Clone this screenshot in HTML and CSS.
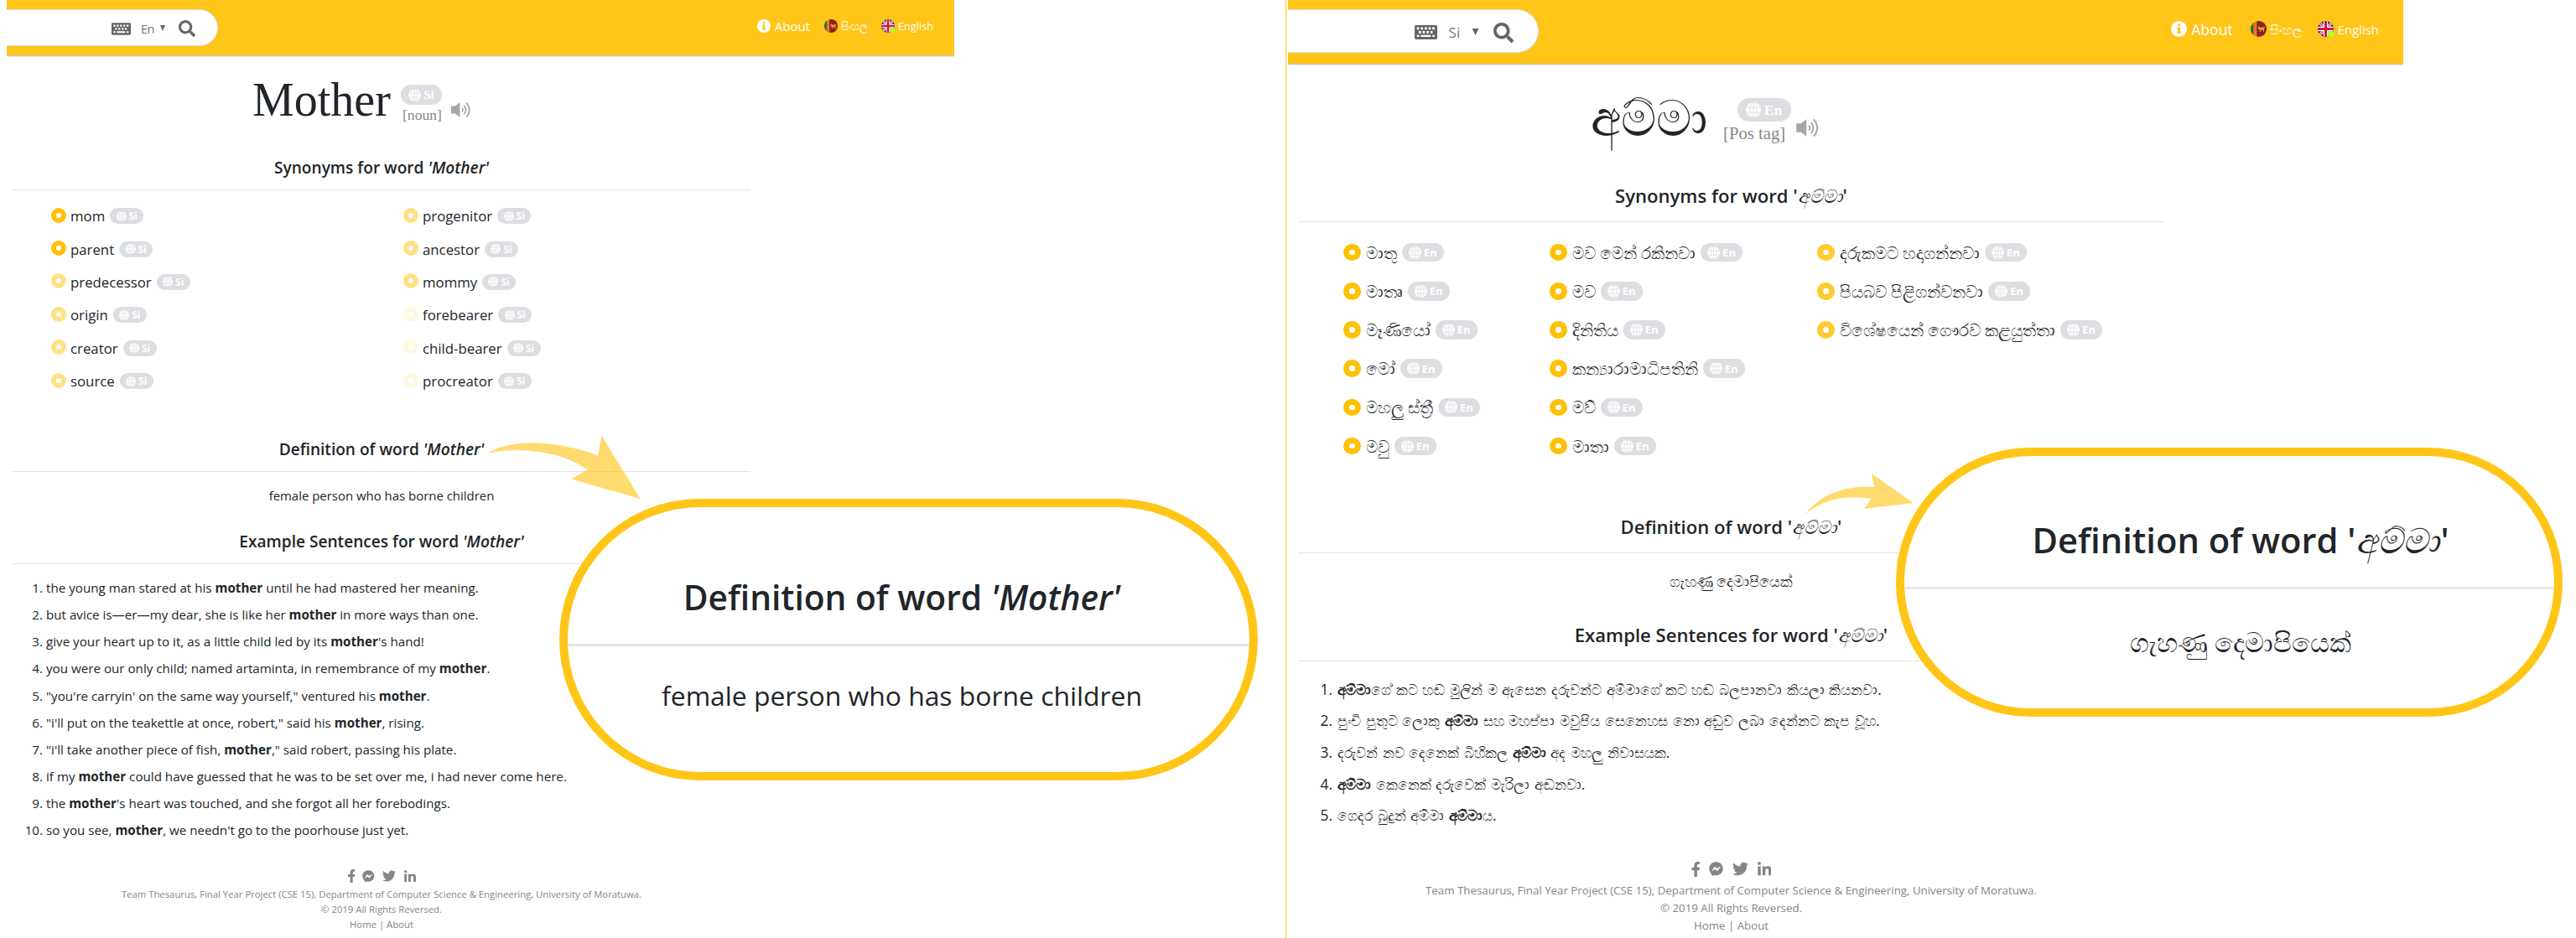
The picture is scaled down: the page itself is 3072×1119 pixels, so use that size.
FILE: index.html
```
<!DOCTYPE html>
<html lang="en">
<head>
<meta charset="utf-8">
<title>Thesaurus</title>
<link rel="stylesheet" href="styles.css">
</head>
<body>
<svg class="defs" aria-hidden="true">
  <symbol id="keyboard" viewBox="0 0 24 15">
    <path fill="currentColor" fill-rule="evenodd" d="M1.5 0h21A1.5 1.5 0 0 1 24 1.500v12a1.5 1.500 0 0 1-1.500 1.500h-21A1.500 1.500 0 0 1 0 13.500v-12A1.500 1.500 0 0 1 1.500 0zM2.400 2.200v2.400h2.400v-2.400zM6.500 2.200v2.400h2.400v-2.400zM10.600 2.200v2.400h2.400v-2.400zM14.700 2.200v2.400h2.400v-2.400zM18.800 2.200v2.400h2.400v-2.400zM4.400 6.200v2.400h2.400v-2.400zM8.500 6.200v2.400h2.400v-2.400zM12.600 6.200v2.400h2.400v-2.400zM16.700 6.200v2.400h2.400v-2.400zM2.400 10.400v2h2.400v-2zM6.500 10.400v2h10.600v-2zM18.800 10.400v2h2.400v-2z"/>
  </symbol>
  <symbol id="search" viewBox="0 0 512 512"><path fill="currentColor" d="M505 442.700L405.300 343c-4.500-4.500-10.600-7-17-7H372c27.600-35.300 44-79.700 44-128C416 93.100 322.900 0 208 0S0 93.100 0 208s93.100 208 208 208c48.300 0 92.700-16.400 128-44v16.300c0 6.400 2.500 12.500 7 17l99.700 99.700c9.400 9.400 24.600 9.400 33.900 0l28.300-28.300c9.400-9.400 9.400-24.600.1-34zM208 336c-70.700 0-128-57.200-128-128 0-70.700 57.200-128 128-128 70.700 0 128 57.200 128 128 0 70.700-57.200 128-128 128z"/></symbol>
  <symbol id="info" viewBox="0 0 16 16"><circle cx="8" cy="8" r="8" fill="#fff"/><path fill="#ffc517" d="M6.800 3.200h2.400v2.200H6.800zM6 6.500h3.300v4.300h.9v1.600H5.900v-1.600h1V8H6z"/></symbol>
  <symbol id="flag-lk" viewBox="0 0 16 16">
    <clipPath id="c1"><circle cx="8" cy="8" r="8"/></clipPath>
    <g clip-path="url(#c1)"><path fill="#d8a21b" d="M0 0h16v16H0z"/><path fill="#0b6b52" d="M0 0h2.800v16H0z"/><path fill="#ef6c1a" d="M2.800 0h2.400v16H2.800z"/><path fill="#8d2029" d="M6 0h10v16H6z"/><path fill="#e0a21c" d="M7.500 6.500l1-1.500 1 1.500h3l1-1 .8 1-.8 1v3.500h-1V9.300H10V11H9V8.500H7.500z"/></g>
  </symbol>
  <symbol id="flag-uk" viewBox="0 0 16 16">
    <clipPath id="c2"><circle cx="8" cy="8" r="8"/></clipPath>
    <g clip-path="url(#c2)"><path fill="#18246b" d="M0 0h16v16H0z"/><path stroke="#fff" stroke-width="2.600" d="M0 0l16 16M16 0L0 16"/><path stroke="#d8153a" stroke-width="1" d="M0 0l16 16M16 0L0 16"/><path stroke="#fff" stroke-width="4.600" d="M8 0v16M0 8h16"/><path stroke="#d8153a" stroke-width="2.600" d="M8 0v16M0 8h16"/></g>
    <circle cx="13" cy="13" r="3.200" fill="#adff2f"/>
  </symbol>
  <symbol id="globe" viewBox="0 0 16 16"><circle cx="8" cy="8" r="8" fill="#fff"/><path fill="none" stroke="#dddee1" stroke-width=".8" d="M8 0v16M.3 5.300h15.400M.3 10.700h15.400"/><ellipse cx="8" cy="8" rx="3.700" ry="8" fill="none" stroke="#dddee1" stroke-width=".8"/></symbol>
  <symbol id="speaker" viewBox="0 0 24 20"><path fill="#a6a6a6" d="M0 5.500h5L10.500 1v18L5 14.500H0z"/><path fill="none" stroke="#a6a6a6" stroke-width="1.700" d="M13 7.500q2 2.500 0 5M15.300 4.500q4.600 5.500 0 11M18 1.200q7.500 8.800 0 17.600"/></symbol>
  <symbol id="facebook" viewBox="22 0 258 512"><path fill="currentColor" d="M279.140 288l14.220-92.660h-88.910v-60.130c0-25.350 12.420-50.060 52.240-50.060h40.420V6.260S260.430 0 225.360 0c-73.220 0-121.080 44.380-121.080 124.720v70.620H22.890V288h81.390v224h100.170V288z"/></symbol>
  <symbol id="messenger" viewBox="0 0 512 512"><path fill="currentColor" d="M256.550 8C116.520 8 8 110.340 8 248.570c0 72.300 29.710 134.780 78.070 177.940 8.350 7.510 6.630 11.860 8.050 58.230A19.920 19.920 0 0 0 122 502.310c52.910-23.300 53.590-25.140 62.560-22.700C337.850 521.800 504 423.700 504 248.570 504 110.340 396.590 8 256.550 8zm149.240 185.130l-73 115.570a37.370 37.370 0 0 1-53.910 9.930l-58.080-43.470a15 15 0 0 0-18 0l-78.370 59.440c-10.460 7.930-24.160-4.600-17.110-15.670l73-115.570a37.360 37.360 0 0 1 53.910-9.930l58.060 43.460a15 15 0 0 0 18 0l78.410-59.380c10.440-7.980 24.140 4.540 17.090 15.620z"/></symbol>
  <symbol id="twitter" viewBox="0 0 512 512"><path fill="currentColor" d="M459.370 151.716c.325 4.548.325 9.097.325 13.645 0 138.720-105.583 298.558-298.558 298.558-59.452 0-114.680-17.219-161.137-47.106 8.447.974 16.568 1.299 25.340 1.299 49.055 0 94.213-16.568 130.274-44.832-46.132-.975-84.792-31.188-98.112-72.772 6.498.974 12.995 1.624 19.818 1.624 9.421 0 18.843-1.300 27.614-3.573-48.081-9.747-84.143-51.980-84.143-102.985v-1.299c13.969 7.797 30.214 12.670 47.431 13.319-28.264-18.843-46.781-51.005-46.781-87.391 0-19.492 5.197-37.360 14.294-52.954 51.655 63.675 129.300 105.258 216.365 109.807-1.624-7.797-2.599-15.918-2.599-24.040 0-57.828 46.782-104.934 104.934-104.934 30.213 0 57.502 12.670 76.670 33.137 23.715-4.548 46.456-13.320 66.599-25.340-7.798 24.366-24.366 44.833-46.132 57.827 21.117-2.273 41.584-8.122 60.426-16.243-14.292 20.791-32.161 39.308-52.628 54.253z"/></symbol>
  <symbol id="linkedin" viewBox="0 0 448 448"><path fill="currentColor" d="M100.280 448H7.400V148.900h92.880zM53.790 108.100C24.090 108.100 0 83.500 0 53.800a53.790 53.790 0 0 1 107.580 0c0 29.700-24.100 54.300-53.790 54.300zM447.900 448h-92.680V302.400c0-34.700-.7-79.200-48.290-79.200-48.290 0-55.690 37.700-55.690 76.700V448h-92.780V148.900h89.080v40.800h1.300c12.400-23.500 42.690-48.300 87.880-48.300 94 0 111.280 61.900 111.280 142.300V448z"/></symbol>
</svg>

<main class="board">
<section class="panel en">
  <header class="bar">
    <div class="searchbox"><svg class="kb"><use href="#keyboard"/></svg><span class="lang">En</span><i class="caret"></i><svg class="mag"><use href="#search"/></svg></div>
    <nav>
      <a class="about"><svg><use href="#info"/></svg>About</a>
      <a class="si-link"><svg><use href="#flag-lk"/></svg>සිංහල</a>
      <a class="en-link"><svg><use href="#flag-uk"/></svg>English</a>
    </nav>
  </header>
  <div class="content">
    <div class="title">
      <h1>Mother</h1>
      <div class="meta"><span class="badge big"><svg><use href="#globe"/></svg>Si</span><span class="pos">[noun]</span></div>
      <svg class="spk"><use href="#speaker"/></svg>
    </div>
    <h2>Synonyms for word <em>'Mother'</em></h2>
    <div class="cols">
      <ul>
        <li><i class="dot"></i>mom<span class="badge"><svg><use href="#globe"/></svg>Si</span></li>
        <li><i class="dot"></i>parent<span class="badge"><svg><use href="#globe"/></svg>Si</span></li>
        <li><i class="dot mid"></i>predecessor<span class="badge"><svg><use href="#globe"/></svg>Si</span></li>
        <li><i class="dot mid"></i>origin<span class="badge"><svg><use href="#globe"/></svg>Si</span></li>
        <li><i class="dot mid"></i>creator<span class="badge"><svg><use href="#globe"/></svg>Si</span></li>
        <li><i class="dot mid"></i>source<span class="badge"><svg><use href="#globe"/></svg>Si</span></li>
      </ul>
      <ul>
        <li><i class="dot mid"></i>progenitor<span class="badge"><svg><use href="#globe"/></svg>Si</span></li>
        <li><i class="dot mid"></i>ancestor<span class="badge"><svg><use href="#globe"/></svg>Si</span></li>
        <li><i class="dot mid"></i>mommy<span class="badge"><svg><use href="#globe"/></svg>Si</span></li>
        <li><i class="dot low"></i>forebearer<span class="badge"><svg><use href="#globe"/></svg>Si</span></li>
        <li><i class="dot low"></i>child-bearer<span class="badge"><svg><use href="#globe"/></svg>Si</span></li>
        <li><i class="dot low"></i>procreator<span class="badge"><svg><use href="#globe"/></svg>Si</span></li>
      </ul>
    </div>
    <h2>Definition of word <em>'Mother'</em></h2>
    <p class="def">female person who has borne children</p>
    <h2>Example Sentences for word <em>'Mother'</em></h2>
    <ol>
      <li>the young man stared at his <b>mother</b> until he had mastered her meaning.</li>
      <li>but avice is—er—my dear, she is like her <b>mother</b> in more ways than one.</li>
      <li>give your heart up to it, as a little child led by its <b>mother</b>'s hand!</li>
      <li>you were our only child; named artaminta, in remembrance of my <b>mother</b>.</li>
      <li>"you're carryin' on the same way yourself," ventured his <b>mother</b>.</li>
      <li>"i'll put on the teakettle at once, robert," said his <b>mother</b>, rising.</li>
      <li>"i'll take another piece of fish, <b>mother</b>," said robert, passing his plate.</li>
      <li>if my <b>mother</b> could have guessed that he was to be set over me, i had never come here.</li>
      <li>the <b>mother</b>'s heart was touched, and she forgot all her forebodings.</li>
      <li>so you see, <b>mother</b>, we needn't go to the poorhouse just yet.</li>
    </ol>
    <footer>
      <div class="social"><svg class="fb"><use href="#facebook"/></svg><svg class="ms"><use href="#messenger"/></svg><svg class="tw"><use href="#twitter"/></svg><svg class="in"><use href="#linkedin"/></svg></div>
      <p>Team Thesaurus, Final Year Project (CSE 15), Department of Computer Science &amp; Engineering, University of Moratuwa.</p>
      <p>© 2019 All Rights Reversed.</p>
      <p>Home | About</p>
    </footer>
  </div>
  <svg class="arrow" viewBox="581 519 183 77"><path d="M581 540.700C598 531 619 528 640.600 528.400C668 530 692 535 713 543.400L717.500 519.700L763.600 595L681 571.500L700.600 560.400C680 545 650 538 616 536.700C603 537 591 538.500 581 540.700Z"/></svg>
  <aside class="callout">
    <h3>Definition of word <em>'Mother'</em></h3>
    <p>female person who has borne children</p>
  </aside>
</section>

<section class="panel si">
  <header class="bar">
    <div class="searchbox"><svg class="kb"><use href="#keyboard"/></svg><span class="lang">Si</span><i class="caret"></i><svg class="mag"><use href="#search"/></svg></div>
    <nav>
      <a class="about"><svg><use href="#info"/></svg>About</a>
      <a class="si-link"><svg><use href="#flag-lk"/></svg>සිංහල</a>
      <a class="en-link"><svg><use href="#flag-uk"/></svg>English</a>
    </nav>
  </header>
  <div class="content">
    <div class="title">
      <h1>අම්මා</h1>
      <div class="meta"><span class="badge big"><svg><use href="#globe"/></svg>En</span><span class="pos">[Pos tag]</span></div>
      <svg class="spk"><use href="#speaker"/></svg>
    </div>
    <h2>Synonyms for word '<em>අම්මා</em>'</h2>
    <div class="cols">
      <ul>
        <li><i class="dot"></i>මාතු<span class="badge"><svg><use href="#globe"/></svg>En</span></li>
        <li><i class="dot"></i>මාතෘ<span class="badge"><svg><use href="#globe"/></svg>En</span></li>
        <li><i class="dot"></i>මෑණියෝ<span class="badge"><svg><use href="#globe"/></svg>En</span></li>
        <li><i class="dot"></i>මෝ<span class="badge"><svg><use href="#globe"/></svg>En</span></li>
        <li><i class="dot"></i>මහලු ස්ත්‍රී<span class="badge"><svg><use href="#globe"/></svg>En</span></li>
        <li><i class="dot"></i>මවු<span class="badge"><svg><use href="#globe"/></svg>En</span></li>
      </ul>
      <ul>
        <li><i class="dot"></i>මව මෙන් රකිනවා<span class="badge"><svg><use href="#globe"/></svg>En</span></li>
        <li><i class="dot"></i>මව<span class="badge"><svg><use href="#globe"/></svg>En</span></li>
        <li><i class="dot"></i>දිනිතිය<span class="badge"><svg><use href="#globe"/></svg>En</span></li>
        <li><i class="dot"></i>කන්‍යාරාමාධිපතිනි<span class="badge"><svg><use href="#globe"/></svg>En</span></li>
        <li><i class="dot"></i>මව්<span class="badge"><svg><use href="#globe"/></svg>En</span></li>
        <li><i class="dot"></i>මාතා<span class="badge"><svg><use href="#globe"/></svg>En</span></li>
      </ul>
      <ul>
        <li><i class="dot high"></i>දරුකමට හදාගන්නවා<span class="badge"><svg><use href="#globe"/></svg>En</span></li>
        <li><i class="dot high"></i>පියබව පිළිගන්වනවා<span class="badge"><svg><use href="#globe"/></svg>En</span></li>
        <li><i class="dot high"></i>විශේෂයෙන් ගෞරව කළයුත්තා<span class="badge"><svg><use href="#globe"/></svg>En</span></li>
      </ul>
    </div>
    <h2>Definition of word '<em>අම්මා</em>'</h2>
    <p class="def">ගැහණු දෙමාපියෙක්</p>
    <h2>Example Sentences for word '<em>අම්මා</em>'</h2>
    <ol>
      <li><b>අම්මා</b>ගේ කට හඬ මුලින් ම ඇසෙන දරුවන්ට අම්මාගේ කට හඬ බලපානවා කියලා කියනවා.</li>
      <li>පුංචි පුතුට ලොකු <b>අම්මා</b> සහ මහප්පා මවුපිය සෙනෙහස නො අඩුව ලබා දෙන්නට කැප වූහ.</li>
      <li>දරුවන් නව දෙනෙක් බිහිකල <b>අම්මා</b> අද මහලු නිවාසයක.</li>
      <li><b>අම්මා</b> කෙනෙක් දරුවෙක් මැරිලා අඬනවා.</li>
      <li>ගෙදර බුදුන් අම්මා <b>අම්මා</b>ය.</li>
    </ol>
    <footer>
      <div class="social"><svg class="fb"><use href="#facebook"/></svg><svg class="ms"><use href="#messenger"/></svg><svg class="tw"><use href="#twitter"/></svg><svg class="in"><use href="#linkedin"/></svg></div>
      <p>Team Thesaurus, Final Year Project (CSE 15), Department of Computer Science &amp; Engineering, University of Moratuwa.</p>
      <p>© 2019 All Rights Reversed.</p>
      <p>Home | About</p>
    </footer>
  </div>
  <svg class="arrow" viewBox="2152 565 130 49"><path d="M2152.700 613.500C2165 598 2179 589 2198.600 584C2210 581 2223 580 2235.300 581L2232 565L2281.700 600L2223 607L2231.700 595C2217 592.500 2202 592.500 2188 595.700C2175 599 2163 605 2152.700 613.500Z"/></svg>
  <aside class="callout">
    <h3>Definition of word '<em>අම්මා</em>'</h3>
    <p>ගැහණු දෙමාපියෙක්</p>
  </aside>
</section>
</main>
</body>
</html>
```
FILE: styles.css
```
* { box-sizing: border-box; margin: 0; padding: 0; }
body { background: #fff; color: #212529; font-family: "Open Sans", sans-serif; }
svg { display: block; flex: none; }
.defs { position: absolute; width: 0; height: 0; }
.board { display: flex; width: 3072px; height: 1119px; overflow: hidden; }
.panel { position: relative; height: 1119px; }
.en { width: 1533px; padding-left: 8px; }
.si { width: 1539px; padding-left: 2px; border-left: 1.500px solid #ffc517; }

.bar { display: flex; justify-content: space-between; align-items: flex-start; background: #ffc517; box-shadow: 0 1px 2px rgba(0,0,0,.3); clip-path: inset(0 0 -5px 0); }
.en .bar { width: 1130px; height: 66px; }
.si .bar { width: 1330px; height: 76px; }
.searchbox { display: flex; align-items: center; background: #fff; border: 1px solid #dcdde3; border-left: 0; color: #666; }
.en .searchbox { width: 252px; height: 44px; margin-top: 11px; padding-left: 125px; border-radius: 0 22px 22px 0; }
.si .searchbox { width: 299px; height: 52px; margin-top: 11px; padding-left: 150.500px; border-radius: 0 26px 26px 0; }
.lang { color: #777; }
.caret { width: 6px; height: 7px; background: #666; clip-path: polygon(0 0, 100% 0, 50% 100%); }
.en .kb { width: 23px; height: 15px; margin-top: 2px; }
.en .lang { width: 23px; margin-left: 12px; font-size: 14.500px; line-height: 20px; margin-top: 3px; letter-spacing: -.6px; }
.en .caret { margin-top: 1px; }
.en .mag { width: 20px; height: 20px; margin-left: 16px; margin-top: 2px; }
.si .kb { width: 27px; height: 17px; margin-top: 3px; }
.si .lang { width: 28px; margin-left: 14px; font-size: 17.200px; line-height: 24px; margin-top: 3px; }
.si .caret { width: 8px; height: 8px; margin-top: 2px; }
.si .mag { width: 24px; height: 24px; margin-left: 17.500px; margin-top: 3px; }
nav { display: flex; color: #fff; }
nav a { display: flex; align-items: center; }
.en nav { height: 24px; margin-top: 19px; padding-right: 25px; }
.en nav svg { width: 16px; height: 16px; }
.en .about { font-size: 15px; gap: 5px; }
.en .si-link { font-size: 12.800px; gap: 4px; margin-left: 17px; }
.en .en-link { font-size: 12.700px; gap: 4px; margin-left: 16px; }
.si nav { height: 28px; margin-top: 20.500px; padding-right: 29px; }
.si nav svg { width: 19px; height: 19px; }
.si .about { font-size: 17.600px; gap: 5px; }
.si .si-link { font-size: 14.800px; gap: 4px; margin-left: 21px; }
.si .en-link { font-size: 14.900px; gap: 5px; margin-left: 19px; }

.en .content { width: 887px; padding-left: 7px; }
.si .content { width: 1045px; padding-left: 12px; }
.title { display: flex; align-items: flex-start; }
.en .title { height: 119px; padding: 25px 0 0 286px; }
.si .title { height: 140px; padding: 29px 0 0 349px; }
h1 { font-weight: 400; font-family: "Liberation Serif", serif; }
.en h1 { width: 177px; font-size: 56px; line-height: 56px; }
.si h1 { width: 158px; font-size: 59px; line-height: 74px; white-space: nowrap; }
.meta { display: flex; flex-direction: column; font-family: "Liberation Serif", serif; }
.en .meta { width: 60px; padding-top: 10px; }
.si .meta { width: 87px; padding-top: 12px; }
.pos { color: #888; white-space: nowrap; }
.en .pos { font-size: 17.600px; line-height: 20px; margin: 2px 0 0 2px; }
.si .pos { font-size: 20.700px; line-height: 24px; margin-top: 2px; }
.en .spk { width: 24px; height: 20px; margin-top: 30px; }
.si .spk { width: 28px; height: 23px; margin-top: 36px; }

.badge { display: inline-flex; align-items: center; justify-content: center; background: #dddee1; color: #fff; font-weight: 700; }
.en .badge { width: 40px; height: 19px; margin-left: 6px; border-radius: 10px; font-size: 12px; gap: 3px; }
.si .badge { width: 50.500px; height: 22.500px; margin-left: 6px; border-radius: 11px; font-size: 13px; gap: 3px; }
.en .badge svg { width: 12px; height: 12px; }
.si .badge svg { width: 15px; height: 15px; }
.en .badge.big { width: 49px; height: 24px; margin-left: 0; border-radius: 12px; font-size: 15px; }
.si .badge.big { width: 64.500px; height: 28px; margin-left: 16.500px; border-radius: 14px; font-size: 17.600px; gap: 4px; }
.en .badge.big svg { width: 15px; height: 15px; }
.si .badge.big svg { width: 18px; height: 18px; }

h2 { font-weight: 600; text-align: center; border-bottom: 1px solid #e2e3e4; white-space: nowrap; }
.en h2 { height: 42px; font-size: 19.100px; line-height: 30px; }
.si h2 { height: 49px; font-size: 22.100px; line-height: 34px; border-bottom-width: 1.500px; }
.si h2 em, .si h3 em { font-weight: 400; margin-right: 1px; }
ul, ol { list-style: none; }
.cols { display: grid; }
.en .cols { grid-template-columns: 420px 1fr; padding: 11px 0 47px 46px; font-size: 16.800px; }
.si .cols { grid-template-columns: 246px 319px 1fr; padding: 13px 0 55.500px 54px; font-size: 19.800px; }
.cols li { display: flex; align-items: center; white-space: nowrap; }
.en .cols li { height: 39.400px; }
.si .cols li { height: 46.200px; }
.dot { border-radius: 50%; border: 6px solid #ffc107; }
.dot.high { border-color: #ffcb2f; }
.dot.mid { border-color: #ffe083; }
.dot.low { border-color: #fff8e1; }
.en .dot { width: 18px; height: 18px; margin-right: 5px; margin-top: -2px; }
.si .dot { width: 20.500px; height: 20.500px; border-width: 7px; margin-right: 6px; }
.def { text-align: center; }
.en .def { margin: 16px 0 27.500px; font-size: 14.950px; line-height: 24px; }
.si .def { margin: 19px 0 33px; font-size: 17.700px; line-height: 28px; }
ol { counter-reset: n; }
ol li { counter-increment: n; display: flex; white-space: pre; }
ol li::before { content: counter(n) "."; text-align: right; flex: none; }
.en ol { padding: 12.500px 0 0 11px; font-size: 15.180px; line-height: 32.050px; }
.en ol li::before { width: 25px; margin-right: 4px; }
.si ol { padding: 15px 0 0 14px; font-size: 17.300px; line-height: 37.700px; word-spacing: 1.200px; }
.si ol li::before { width: 27px; margin-right: 6px; }
b { font-weight: 700; }

footer { text-align: center; color: #858585; }
.social { display: flex; justify-content: center; align-items: center; }
.en .social { height: 16px; gap: 9.500px; margin: 31px 0 5px; }
.si .social { height: 18px; gap: 11px; margin: 35.500px 0 6px; }
.en .fb { width: 8px; height: 16px; }
.en .ms { width: 14.500px; height: 14.500px; }
.en .tw { width: 16px; height: 16px; }
.en .in { width: 14px; height: 14px; }
.si .fb { width: 10px; height: 18px; }
.si .ms { width: 17px; height: 17px; }
.si .tw { width: 19px; height: 19px; }
.si .in { width: 16.500px; height: 16.500px; }
.en footer p { font-size: 11.320px; line-height: 17.900px; }
.si footer p { font-size: 13.300px; line-height: 21.300px; white-space: nowrap; }

.arrow { position: absolute; fill: #ffc517; opacity: .62; }
.en .arrow { left: 581px; top: 519px; width: 183px; height: 77px; }
.si .arrow { left: 617.500px; top: 565px; width: 130px; height: 49px; }
.callout { position: absolute; border: 10px solid #ffc517; border-radius: 168px; background: #fff; text-align: center; white-space: nowrap; overflow: hidden; }
.en .callout { left: 667px; top: 595px; width: 833px; height: 336px; }
.si .callout { left: 727px; top: 534px; width: 795px; height: 321px; }
.callout h3 { font-weight: 600; }
.en .callout h3 { height: 166px; padding-top: 82px; font-size: 40.700px; line-height: 50px; border-bottom: 3px solid #e2e2e2; padding-right: 16px; }
.en .callout p { margin-top: 37px; font-size: 31.850px; line-height: 44px; padding-right: 16px; }
.si .callout h3 { height: 159px; padding: 75px 0 0 27px; font-size: 41.700px; line-height: 50px; border-bottom: 3px solid #e8e8e8; }
.si .callout p { margin-top: 36px; font-size: 32px; line-height: 54px; padding-left: 27px; }
```
